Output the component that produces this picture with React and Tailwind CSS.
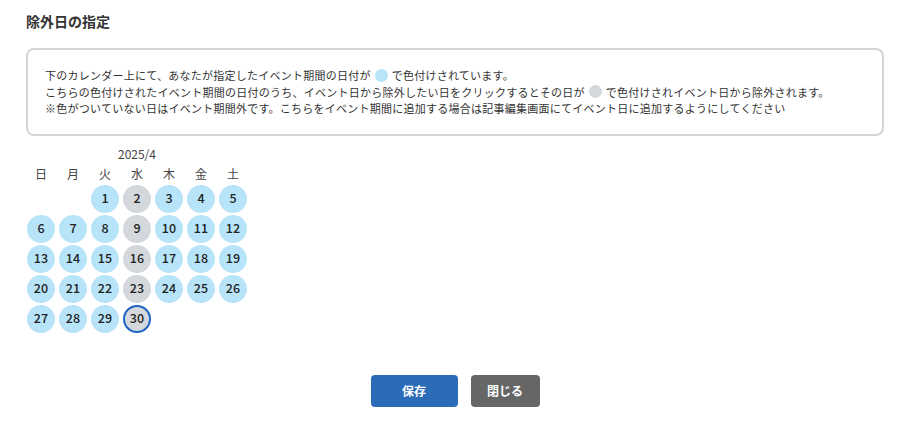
const WEEK = ["日", "月", "火", "水", "木", "金", "土"];

// April 2025 starts on Tuesday
const EXCLUDED = [2, 9, 16, 23, 30];

const Day = ({ d }) => {
    const excluded = EXCLUDED.includes(d);
    const selected = d === 30;
    return (
        <div className="flex h-[30px] items-center justify-center">
            <div
                className={
                    "flex h-[28px] w-[28px] items-center justify-center rounded-full text-[12.5px] font-medium text-[#222] " +
                    (excluded ? "bg-[#d4d8dc] " : "bg-[#b8e4fa] ") +
                    (selected ? "border-2 border-[#1f64c4]" : "")
                }
            >
                {d}
            </div>
        </div>
    );
};

const App = () => {
    const days = Array.from({ length: 30 }, (_, i) => i + 1);
    return (
        <div
            className="h-[435px] w-[900px] bg-white px-[26px] pt-[11px] text-[#333]"
            style={{ fontFamily: '"Noto Sans CJK JP", "Noto Sans", sans-serif' }}
        >
            <h2 className="text-[14px] font-bold leading-[20px] text-[#333]">
                除外日の指定
            </h2>

            {/* 説明 */}
            <div className="mt-[17px] w-[858px] rounded-[8px] border-2 border-[#d6d6d6] px-[17px] py-[17px] text-[11px] leading-[16.5px] tracking-[0.25px] text-[#333]">
                <p className="flex items-center">
                    下のカレンダー上にて、あなたが指定したイベント期間の日付が
                    <span className="mx-[4px] inline-block h-[13px] w-[13px] rounded-full bg-[#b8e4fa]" />
                    で色付けされています。
                </p>
                <p className="flex items-center">
                    こちらの色付けされたイベント期間の日付のうち、イベント日から除外したい日をクリックするとその日が
                    <span className="mx-[4px] inline-block h-[13px] w-[13px] rounded-full bg-[#d4d8dc]" />
                    で色付けされイベント日から除外されます。
                </p>
                <p>
                    ※色がついていない日はイベント期間外です。こちらをイベント期間に追加する場合は記事編集画面にてイベント日に追加するようにしてください
                </p>
            </div>

            {/* カレンダー */}
            <div className="ml-[-1px] mt-[10px] w-[224px]">
                <div className="h-[16px] text-center text-[12px] leading-[16px] text-[#444]">
                    2025/4
                </div>
                <div className="mt-[4px] grid grid-cols-7">
                    {WEEK.map((w) => (
                        <div key={w} className="h-[16px] text-center text-[12px] leading-[16px] text-[#444]">
                            {w}
                        </div>
                    ))}
                </div>
                <div className="mt-[2px] grid grid-cols-7">
                    <div />
                    <div />
                    {days.map((d) => (
                        <Day key={d} d={d} />
                    ))}
                </div>
            </div>

            {/* ボタン */}
            <div className="mt-[41px] flex justify-center gap-[13px] pl-[10px]">
                <button className="h-[32px] w-[87px] rounded-[4px] bg-[#2b6cb8] text-[12px] font-bold text-white">
                    保存
                </button>
                <button className="h-[32px] w-[69px] rounded-[4px] bg-[#666] text-[12px] font-bold text-white">
                    閉じる
                </button>
            </div>
        </div>
    );
};

export default App;
